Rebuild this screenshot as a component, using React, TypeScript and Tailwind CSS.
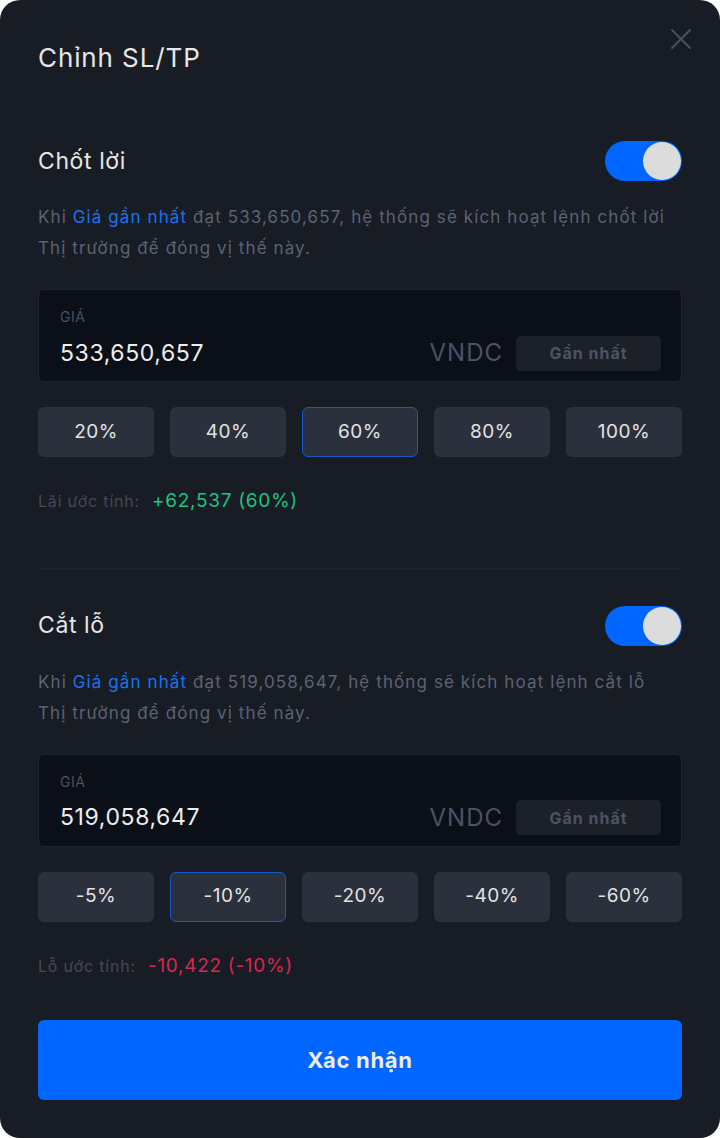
import { useState } from 'react'
import clsx from 'clsx'

function Toggle({ on }: { on: boolean }) {
  return (
    <div
      className={clsx(
        'w-[77px] h-[40px] rounded-full flex items-center px-[1px]',
        on ? 'bg-[#0066ff] justify-end' : 'bg-[#3a3f4b] justify-start'
      )}
    >
      <div className="w-[38px] h-[38px] rounded-full bg-[#dcdcdc]" />
    </div>
  )
}

interface SectionProps {
  title: string
  price: string
  action: string
  options: string[]
  selected: number
  estLabel: string
  estValue: string
  positive: boolean
}

function Section({ title, price, action, options, selected, estLabel, estValue, positive }: SectionProps) {
  const [sel, setSel] = useState(selected)
  return (
    <div className="flex flex-col">
      <div className="flex items-center justify-between h-[40px]">
        <h3 className="text-[23px] tracking-[0.6px] text-[#e6e6e6]">{title}</h3>
        <Toggle on />
      </div>

      <p className="mt-[21px] text-[17px] leading-[31px] tracking-[1.1px] text-[#5c6373]">
        Khi <span className="text-[#1a73f0]">Giá gần nhất</span> đạt {price}, hệ thống sẽ kích hoạt lệnh {action}
        <br />
        Thị trường để đóng vị thế này.
      </p>

      {/* ô nhập giá */}
      <div className="mt-[25px] h-[93px] rounded-[6px] bg-[#0b0f18] border border-[#1f232d] pl-[21px] pr-[20px] pt-[19px]">
        <div className="text-[14px] leading-[16px] tracking-[0.5px] text-[#4b5261]">GIÁ</div>
        <div className="flex items-center justify-between mt-[10px]">
          <span className="text-[23px] tracking-[0.6px] text-[#ededed]">{price}</span>
          <div className="flex items-center gap-[13px]">
            <span className="text-[24px] tracking-[1px] text-[#4b5262]">VNDC</span>
            <button className="w-[145px] h-[35px] rounded-[5px] bg-[#1c2029] text-[16px] tracking-[1px] font-bold text-[#4b5364]">
              Gần nhất
            </button>
          </div>
        </div>
      </div>

      <div className="mt-[25px] grid grid-cols-5 gap-[16px]">
        {options.map((o, i) => (
          <button
            key={o}
            onClick={() => setSel(i)}
            className={clsx(
              'h-[50px] rounded-[6px] bg-[#2b303d] text-[19px] tracking-[0.5px] text-[#e2e2e2] border',
              i === sel ? 'border-[#1659c8]' : 'border-[#2b303d]'
            )}
          >
            {o}
          </button>
        ))}
      </div>

      <div className="mt-[30px] flex items-center gap-[12px]">
        <span className="text-[16px] tracking-[0.8px] text-[#434957]">{estLabel}</span>
        <span className={clsx('text-[19px] tracking-[0.7px]', positive ? 'text-[#1fc47d]' : 'text-[#d8284f]')}>
          {estValue}
        </span>
      </div>
    </div>
  )
}

export default function App() {
  return (
    <div className="bg-white" style={{ fontFamily: 'Inter, "Noto Sans", sans-serif' }}>
      <div className="relative w-[720px] h-[1138px] rounded-[20px] bg-[#181c25] px-[38px] pt-[40px] pb-[38px] flex flex-col">
        <button className="absolute top-[27px] right-[27px] text-[#4a5264]">
          <svg width="24" height="24" viewBox="0 0 24 24" fill="none" stroke="currentColor" strokeWidth="1.8" strokeLinecap="round">
            <path d="M3 3L21 21M21 3L3 21" />
          </svg>
        </button>

        <h2 className="text-[26px] leading-[36px] tracking-[0.9px] text-[#e6e6e6]">Chỉnh SL/TP</h2>

        <div className="mt-[65px]">
          <Section
            title="Chốt lời"
            price="533,650,657"
            action="chốt lời"
            options={['20%', '40%', '60%', '80%', '100%']}
            selected={2}
            estLabel="Lãi ước tính:"
            estValue="+62,537 (60%)"
            positive
          />
        </div>

        <div className="mt-[52px] h-px bg-[#20242e]" />

        <div className="mt-[37px]">
          <Section
            title="Cắt lỗ"
            price="519,058,647"
            action="cắt lỗ"
            options={['-5%', '-10%', '-20%', '-40%', '-60%']}
            selected={1}
            estLabel="Lỗ ước tính:"
            estValue="-10,422 (-10%)"
            positive={false}
          />
        </div>

        <button className="mt-auto h-[80px] rounded-[6px] bg-[#0066ff] text-[22px] tracking-[0.7px] font-bold text-[#ececec]">
          Xác nhận
        </button>
      </div>
    </div>
  )
}
